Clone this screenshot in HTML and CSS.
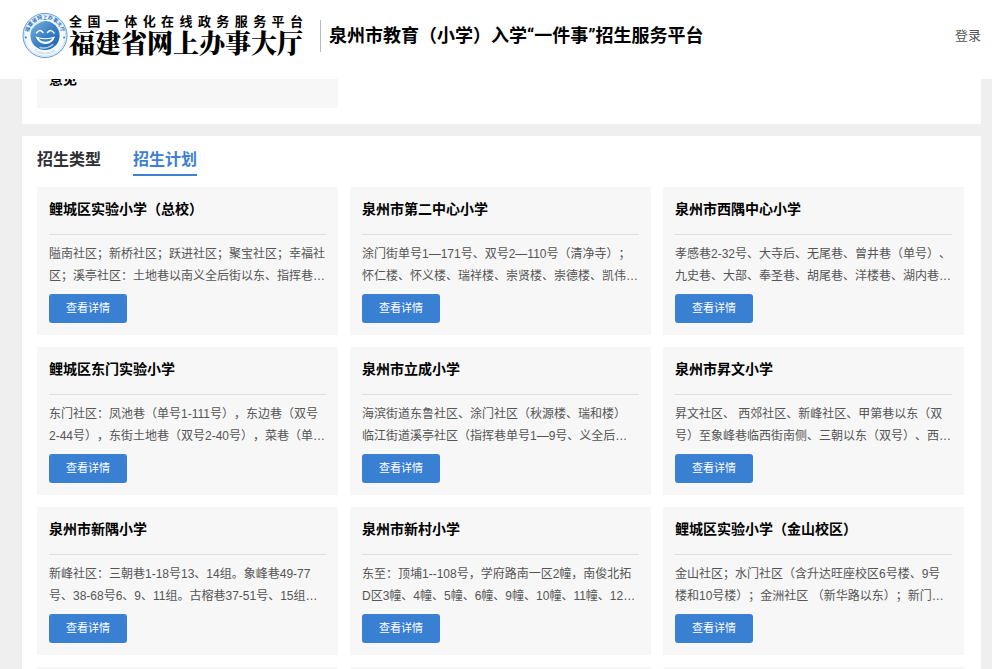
FILE: index.html
```html
<!DOCTYPE html>
<html lang="zh-CN">
<head>
<meta charset="utf-8">
<meta name="viewport" content="width=device-width, initial-scale=1">
<title>泉州市教育（小学）入学“一件事”招生服务平台</title>
<link rel="stylesheet" href="styles.css">
</head>
<body>
<header class="header">
  <a class="brand" href="#">
    <svg class="brand-seal" viewBox="0 0 46 46" aria-hidden="true">
      <defs>
        <linearGradient id="disc" x1="0" y1="0" x2="1" y2="1">
          <stop offset="0" stop-color="#7fb2de"/>
          <stop offset=".5" stop-color="#3b83c6"/>
          <stop offset="1" stop-color="#1c5fa9"/>
        </linearGradient>
        <path id="arc-top" d="M6.800 26A16.500 16.500 0 1 1 39.200 26"/>
        <path id="arc-bottom" d="M5.500 31A19.600 19.600 0 0 0 40.500 31"/>
      </defs>
      <circle cx="23" cy="23" r="22" fill="#f4f9fe" stroke="#5d9ad3" stroke-width="1"/>
      <circle cx="23" cy="23" r="20.600" fill="none" stroke="#b4d2ee" stroke-width=".6"/>
      <text class="seal-name"><textPath href="#arc-top" startOffset="50%" text-anchor="middle">福建省网上办事大厅</textPath></text>
      <text class="seal-sub"><textPath href="#arc-bottom" startOffset="50%" text-anchor="middle">FUJIAN ONLINE</textPath></text>
      <circle cx="3.900" cy="25" r="1" fill="#3b83c6"/>
      <circle cx="42.100" cy="25" r="1" fill="#3b83c6"/>
      <circle cx="23" cy="23" r="14.600" fill="url(#disc)"/>
      <path d="M10.500 17C12 11 17 8 23 8.600C17 10 12.500 13 10.500 17Z" fill="#dcebf8"/>
      <path d="M14.500 20.500Q17.500 16 21 20M25.500 20Q29 16 32 20.500" fill="none" stroke="#fff" stroke-width="1.500" stroke-linecap="round"/>
      <path d="M13.500 24Q23 27.500 33 24Q30.500 31.500 23.500 31.500T13.500 24Z" fill="#fff"/>
      <path d="M16.500 25.800Q23 27.500 30.500 25.800Q28 29.300 23.500 29.300T16.500 25.800Z" fill="#3b83c6"/>
      <path d="M18 35Q25 37 31 32" fill="none" stroke="#a9cdec" stroke-width="1.400" stroke-linecap="round"/>
    </svg>
    <span class="brand-text">
      <span class="brand-sub">全国一体化在线政务服务平台</span>
      <span class="brand-name">福建省网上办事大厅</span>
    </span>
  </a>
  <h1 class="site-title">泉州市教育（小学）入学“一件事”招生服务平台</h1>
  <a class="login" href="#">登录</a>
</header>

<main class="page">
  <section class="panel panel-notices">
    <div class="grid">
      <article class="notice">意见</article>
    </div>
  </section>

  <section class="panel">
    <nav class="tabs">
      <a class="tab" href="#">招生类型</a>
      <a class="tab tab-active" href="#" aria-current="page">招生计划</a>
    </nav>
    <div class="grid">
      <article class="card">
        <h2 class="card-title">鲤城区实验小学（总校）</h2>
        <p class="card-desc">隘南社区；新桥社区；跃进社区；聚宝社区；幸福社<br>区；溪亭社区：土地巷以南义全后街以东、指挥巷…</p>
        <button class="btn" type="button">查看详情</button>
      </article>
      <article class="card">
        <h2 class="card-title">泉州市第二中心小学</h2>
        <p class="card-desc">涂门街单号1—171号、双号2—110号（清净寺）；<br>怀仁楼、怀义楼、瑞祥楼、崇贤楼、崇德楼、凯伟…</p>
        <button class="btn" type="button">查看详情</button>
      </article>
      <article class="card">
        <h2 class="card-title">泉州市西隅中心小学</h2>
        <p class="card-desc">孝感巷2-32号、大寺后、无尾巷、曾井巷（单号）、<br>九史巷、大部、奉圣巷、胡尾巷、洋楼巷、湖内巷…</p>
        <button class="btn" type="button">查看详情</button>
      </article>
      <article class="card">
        <h2 class="card-title">鲤城区东门实验小学</h2>
        <p class="card-desc">东门社区：凤池巷（单号1-111号），东边巷（双号<br>2-44号），东街土地巷（双号2-40号），菜巷（单…</p>
        <button class="btn" type="button">查看详情</button>
      </article>
      <article class="card">
        <h2 class="card-title">泉州市立成小学</h2>
        <p class="card-desc">海滨街道东鲁社区、涂门社区（秋源楼、瑞和楼）<br>临江街道溪亭社区（指挥巷单号1—9号、义全后…</p>
        <button class="btn" type="button">查看详情</button>
      </article>
      <article class="card">
        <h2 class="card-title">泉州市昇文小学</h2>
        <p class="card-desc">昇文社区、 西郊社区、新峰社区、甲第巷以东（双<br>号）至象峰巷临西街南侧、三朝以东（双号）、西…</p>
        <button class="btn" type="button">查看详情</button>
      </article>
      <article class="card">
        <h2 class="card-title">泉州市新隅小学</h2>
        <p class="card-desc">新峰社区：三朝巷1-18号13、14组。象峰巷49-77<br>号、38-68号6、9、11组。古榕巷37-51号、15组…</p>
        <button class="btn" type="button">查看详情</button>
      </article>
      <article class="card">
        <h2 class="card-title">泉州市新村小学</h2>
        <p class="card-desc">东至：顶埔1--108号，学府路南一区2幢，南俊北拓<br>D区3幢、4幢、5幢、6幢、9幢、10幢、11幢、12…</p>
        <button class="btn" type="button">查看详情</button>
      </article>
      <article class="card">
        <h2 class="card-title">鲤城区实验小学（金山校区）</h2>
        <p class="card-desc">金山社区；水门社区（含升达旺座校区6号楼、9号<br>楼和10号楼）；金洲社区 （新华路以东）；新门…</p>
        <button class="btn" type="button">查看详情</button>
      </article>
      <article class="card"></article>
      <article class="card"></article>
      <article class="card"></article>
    </div>
  </section>
</main>
</body>
</html>
```
FILE: styles.css
```css
* {
  box-sizing: border-box;
}

html,
body {
  height: 100%;
  margin: 0;
  overflow: hidden;
}

body {
  background: #efefef;
  color: #000;
  font-family: "Liberation Sans", "Noto Sans CJK SC", sans-serif;
  font-size: 12px;
  line-height: 22px;
  text-spacing-trim: space-all;
}

a {
  color: inherit;
  text-decoration: none;
}

h1,
h2,
p {
  margin: 0;
}

/* Header */
.header {
  position: sticky;
  top: 0;
  z-index: 1;
  display: flex;
  align-items: center;
  padding: 12px 11px 20px 22px;
  background: #fff;
}

.brand {
  display: flex;
  align-items: center;
  gap: 1px;
}

.brand-seal {
  width: 46px;
  height: 47px;
}

.seal-name {
  fill: #2f78bf;
  font-size: 5px;
  font-weight: 700;
}

.seal-sub {
  fill: #8db9e0;
  font-size: 3px;
}

.brand-text {
  display: flex;
  flex-direction: column;
}

.brand-sub {
  width: 0;
  min-width: 100%;
  font-size: 13px;
  font-weight: 700;
  line-height: 18px;
  text-align: justify;
  text-align-last: justify;
}

.brand-name {
  font-family: "Liberation Serif", "Noto Serif CJK SC", "Noto Sans CJK SC", serif;
  font-size: 26px;
  font-weight: 900;
  line-height: 28px;
  white-space: nowrap;
}

.site-title {
  margin-left: 17px;
  padding-left: 8px;
  border-left: 1px solid #bbb;
  font-family: Roboto, "Noto Sans CJK SC", sans-serif;
  font-size: 18px;
  font-weight: 700;
  line-height: 32px;
  white-space: nowrap;
}

.login {
  margin-left: auto;
  color: #555;
  font-size: 13px;
}

/* Page */
.page {
  display: flex;
  flex-direction: column;
  gap: 12px;
  padding: 0 11px 12px 22px;
}

.panel {
  padding: 13px 17px 16px 15px;
  background: #fff;
}

/* The list is scrolled so that its first rows lie under the header. */
.panel-notices {
  margin-top: -42px;
}

.grid {
  display: grid;
  grid-template-columns: repeat(3, minmax(0, 1fr));
  gap: 12px;
}

.notice {
  padding: 18px 12px;
  background: #f7f7f7;
  font-size: 14px;
  font-weight: 700;
}

.tabs {
  display: flex;
  gap: 32px;
  margin-bottom: 11px;
}

.tab {
  padding-bottom: 3px;
  border-bottom: 2px solid transparent;
  color: #303133;
  font-size: 16px;
  font-weight: 700;
}

.tab-active {
  border-color: #3d82d3;
  color: #3d7fd3;
}

.card {
  min-height: 148px;
  padding: 12px;
  background: #f7f7f7;
}

.card-title {
  padding-bottom: 15px;
  border-bottom: 1px solid #ddd;
  font-size: 14px;
  font-weight: 700;
  line-height: 20px;
}

.card-desc {
  margin: 8px 0 7px;
  overflow: hidden;
  color: #555;
  white-space: nowrap;
}

.btn {
  display: block;
  padding: 0 17px;
  border: 0;
  border-radius: 3px;
  background: #3a80d2;
  color: #fff;
  font-family: inherit;
  font-size: 11px;
  line-height: 29px;
}
```
